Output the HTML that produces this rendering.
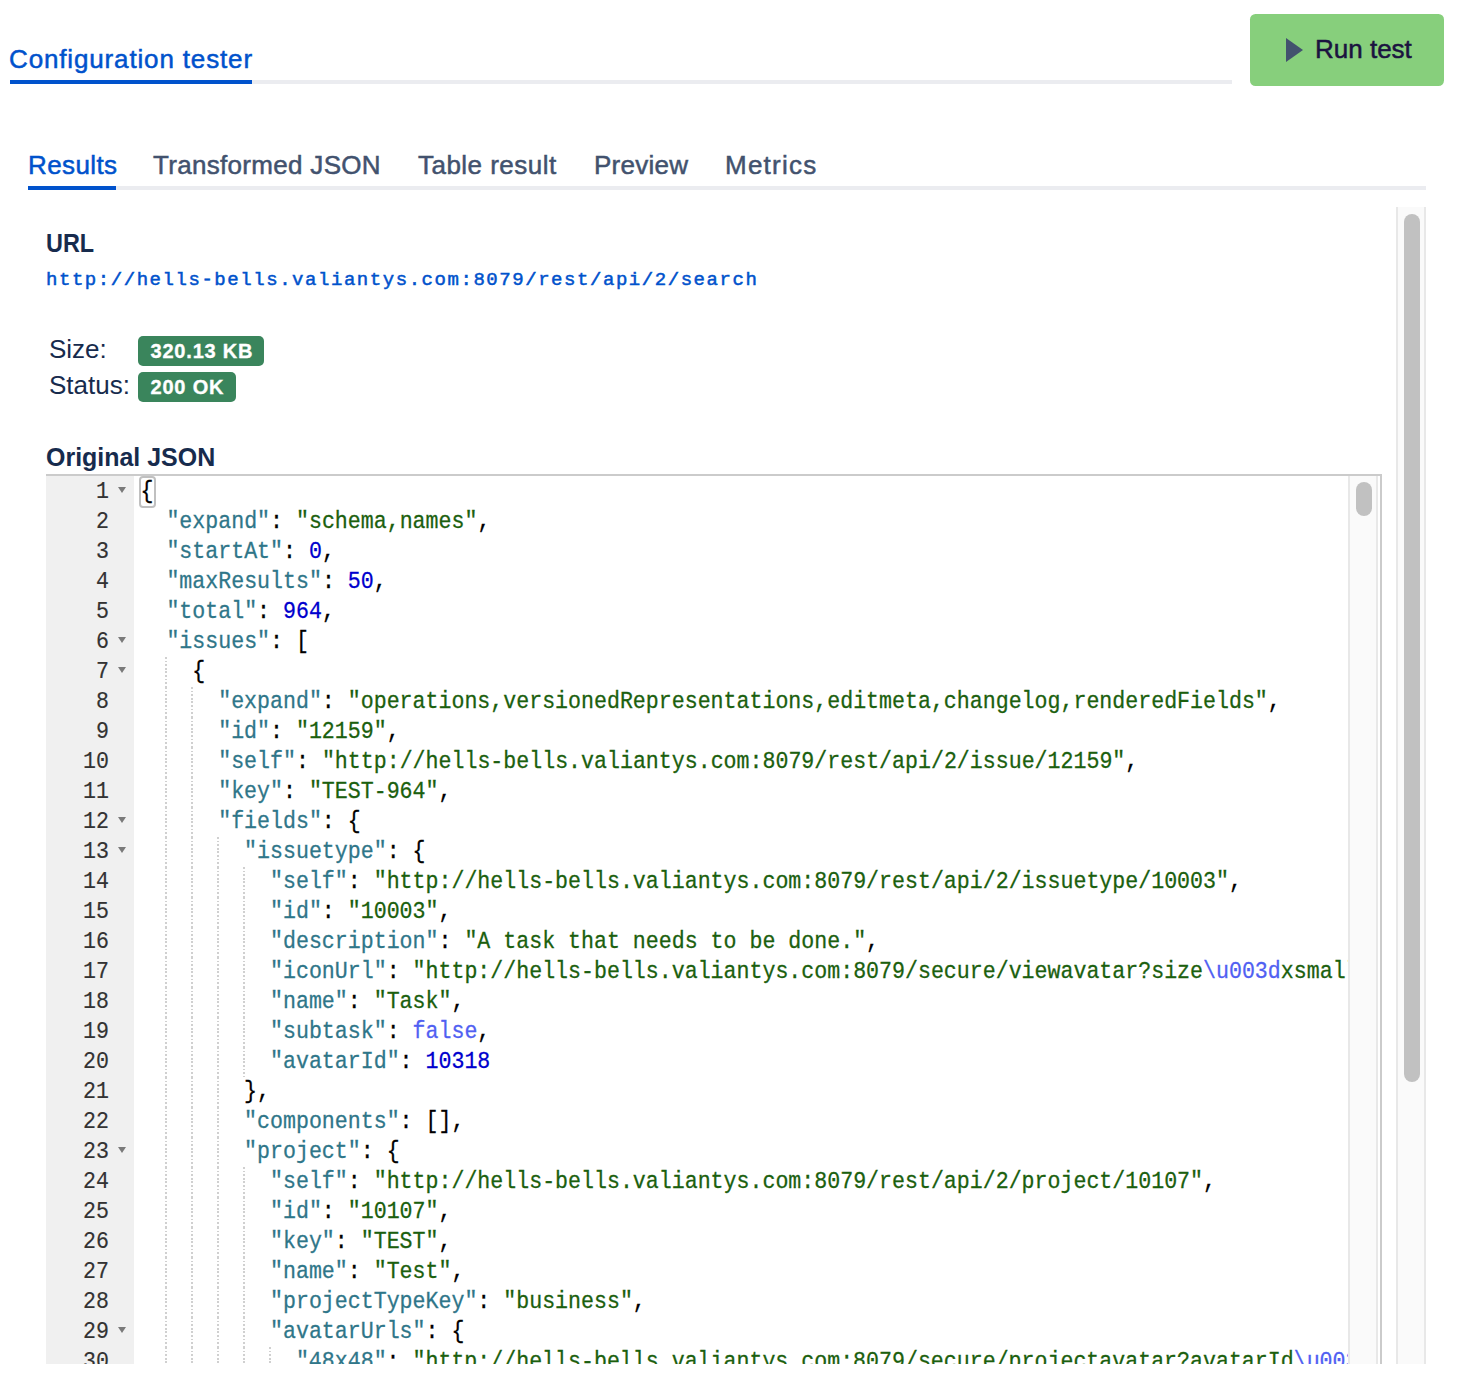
<!DOCTYPE html>
<html><head><meta charset="utf-8">
<style>
html,body{margin:0;padding:0;background:#fff;width:1458px;height:1394px;overflow:hidden;position:relative;font-family:"Liberation Sans",sans-serif;}
.abs{position:absolute;}
.t{position:absolute;white-space:nowrap;line-height:1;}
#ctitle{left:9px;top:46px;font-size:26px;color:#0052cc;letter-spacing:0.85px;-webkit-text-stroke:0.5px #0052cc;}
#cul{left:10px;top:80px;width:242px;height:4px;background:#0052cc;}
#cgl{left:252px;top:80px;width:980px;height:4px;background:#ebecf0;}
#btn{left:1250px;top:14px;width:194px;height:72px;background:#87cf7c;border-radius:5.5px;}
#tri{left:1286px;top:38px;width:0;height:0;border-top:12.5px solid transparent;border-bottom:12.5px solid transparent;border-left:17px solid #42526e;}
#btxt{left:1315px;top:36px;font-size:26px;color:#1b1340;-webkit-text-stroke:0.5px #1b1340;}
.tab{position:absolute;top:152px;-webkit-text-stroke:0.5px currentColor;font-size:26px;color:#42526e;white-space:nowrap;line-height:1;}
#tline{left:28px;top:186px;width:1398px;height:4px;background:#ebecf0;}
#tul{left:28px;top:186px;width:88px;height:4px;background:#0052cc;}
.h{position:absolute;font-weight:bold;font-size:26px;color:#172b4d;white-space:nowrap;line-height:1;}
#url{left:46px;top:271px;font-family:"Liberation Mono",monospace;font-size:19px;letter-spacing:1.55px;color:#0052cc;-webkit-text-stroke:0.5px #0052cc;}
.lbl{position:absolute;font-size:26px;color:#172b4d;white-space:nowrap;line-height:1;}
.badge{position:absolute;background:#3a855c;border-radius:5px;color:#fff;font-weight:bold;font-size:20px;line-height:30px;padding-left:12.5px;letter-spacing:0.8px;-webkit-text-stroke:0.35px #fff;box-sizing:border-box;height:30px;white-space:nowrap;}
#editor{left:46px;top:474px;width:1336px;height:890px;box-sizing:border-box;border-top:2px solid #cbcbcb;border-right:2px solid #cbcbcb;overflow:hidden;background:#fff;}
#gutter{position:absolute;left:0;top:0;width:88px;height:100%;background:#f0f0f0;}
.gl{position:absolute;right:25px;height:30px;line-height:30px;padding-top:1px;font-family:"Liberation Mono",monospace;font-size:21.6px;color:#333;-webkit-text-stroke:0.15px #333;transform:scaleY(1.1);transform-origin:0 21.8px;}
.fw{position:absolute;left:72px;width:0;height:0;border-left:4.5px solid transparent;border-right:4.5px solid transparent;border-top:6px solid #7a7a7a;}
#code{position:absolute;left:94.5px;top:1px;width:1207.5px;height:100%;overflow:hidden;}
.cl{position:absolute;height:30px;line-height:30px;white-space:pre;font-family:"Liberation Mono",monospace;font-size:21.6px;color:#000;-webkit-text-stroke:0.25px currentColor;transform:scaleY(1.1);transform-origin:0 20.8px;}
.v{color:#2f7689}.s{color:#1b600e}.n{color:#0000cd}.l{color:#5060f2}
.ig{position:absolute;width:2px;height:30px;margin-left:-1px;background:repeating-linear-gradient(to bottom,#d0d0d0 0,#d0d0d0 1.8px,transparent 1.8px,transparent 3.6px);}
#brk{position:absolute;left:92.5px;top:0;width:17.3px;height:31.5px;box-sizing:border-box;border:2px solid #c0c0c0;border-radius:4px;}
#isb{position:absolute;left:1302px;top:0;width:30px;height:100%;background:#fafafa;border-left:2px solid #e8e8e8;border-right:2px solid #e8e8e8;box-sizing:border-box;}
#ithumb{position:absolute;left:1310px;top:6px;width:16px;height:34px;background:#c1c1c1;border-radius:8px;}
#osb{left:1396px;top:207px;width:30px;height:1157px;background:#fafafa;border-left:2px solid #e8e8e8;border-right:2px solid #e8e8e8;box-sizing:border-box;}
#othumb{left:1404px;top:214px;width:16px;height:868px;background:#c1c1c1;border-radius:8px;}
</style></head><body>
<div class="t" id="ctitle">Configuration tester</div>
<div class="abs" id="cgl"></div>
<div class="abs" id="cul"></div>
<div class="abs" id="btn"></div>
<div class="abs" id="tri"></div>
<div class="t" id="btxt">Run test</div>

<div class="abs" id="tline"></div>
<div class="abs" id="tul"></div>
<div class="tab" style="left:28px;color:#0052cc;letter-spacing:0.4px">Results</div>
<div class="tab" style="left:153px;letter-spacing:0.31px">Transformed JSON</div>
<div class="tab" style="left:418px;letter-spacing:0.47px">Table result</div>
<div class="tab" style="left:594px;letter-spacing:0.27px">Preview</div>
<div class="tab" style="left:725px;letter-spacing:1.25px">Metrics</div>

<div class="h" style="left:46px;top:230px;transform:scaleX(0.9);transform-origin:0 0">URL</div>
<div class="t" id="url">http://hells-bells.valiantys.com:8079/rest/api/2/search</div>
<div class="lbl" style="left:49px;top:336px">Size:</div>
<div class="lbl" style="left:49px;top:372px">Status:</div>
<div class="badge" style="left:138px;top:336px;width:126px">320.13 KB</div>
<div class="badge" style="left:138px;top:372px;width:98px">200 OK</div>
<div class="h" style="left:46px;top:444px;transform:scaleX(0.96);transform-origin:0 0">Original JSON</div>

<div class="abs" id="editor">
  <div id="gutter">
<div class="gl" style="top:0px">1</div>
<div class="fw" style="top:11px"></div>
<div class="gl" style="top:30px">2</div>
<div class="gl" style="top:60px">3</div>
<div class="gl" style="top:90px">4</div>
<div class="gl" style="top:120px">5</div>
<div class="gl" style="top:150px">6</div>
<div class="fw" style="top:161px"></div>
<div class="gl" style="top:180px">7</div>
<div class="fw" style="top:191px"></div>
<div class="gl" style="top:210px">8</div>
<div class="gl" style="top:240px">9</div>
<div class="gl" style="top:270px">10</div>
<div class="gl" style="top:300px">11</div>
<div class="gl" style="top:330px">12</div>
<div class="fw" style="top:341px"></div>
<div class="gl" style="top:360px">13</div>
<div class="fw" style="top:371px"></div>
<div class="gl" style="top:390px">14</div>
<div class="gl" style="top:420px">15</div>
<div class="gl" style="top:450px">16</div>
<div class="gl" style="top:480px">17</div>
<div class="gl" style="top:510px">18</div>
<div class="gl" style="top:540px">19</div>
<div class="gl" style="top:570px">20</div>
<div class="gl" style="top:600px">21</div>
<div class="gl" style="top:630px">22</div>
<div class="gl" style="top:660px">23</div>
<div class="fw" style="top:671px"></div>
<div class="gl" style="top:690px">24</div>
<div class="gl" style="top:720px">25</div>
<div class="gl" style="top:750px">26</div>
<div class="gl" style="top:780px">27</div>
<div class="gl" style="top:810px">28</div>
<div class="gl" style="top:840px">29</div>
<div class="fw" style="top:851px"></div>
<div class="gl" style="top:870px">30</div>
  </div>
  <div id="code">
<div class="ig" style="top:180px;left:25.90px"></div>
<div class="ig" style="top:210px;left:25.90px"></div>
<div class="ig" style="top:210px;left:51.80px"></div>
<div class="ig" style="top:240px;left:25.90px"></div>
<div class="ig" style="top:240px;left:51.80px"></div>
<div class="ig" style="top:270px;left:25.90px"></div>
<div class="ig" style="top:270px;left:51.80px"></div>
<div class="ig" style="top:300px;left:25.90px"></div>
<div class="ig" style="top:300px;left:51.80px"></div>
<div class="ig" style="top:330px;left:25.90px"></div>
<div class="ig" style="top:330px;left:51.80px"></div>
<div class="ig" style="top:360px;left:25.90px"></div>
<div class="ig" style="top:360px;left:51.80px"></div>
<div class="ig" style="top:360px;left:77.70px"></div>
<div class="ig" style="top:390px;left:25.90px"></div>
<div class="ig" style="top:390px;left:51.80px"></div>
<div class="ig" style="top:390px;left:77.70px"></div>
<div class="ig" style="top:390px;left:103.60px"></div>
<div class="ig" style="top:420px;left:25.90px"></div>
<div class="ig" style="top:420px;left:51.80px"></div>
<div class="ig" style="top:420px;left:77.70px"></div>
<div class="ig" style="top:420px;left:103.60px"></div>
<div class="ig" style="top:450px;left:25.90px"></div>
<div class="ig" style="top:450px;left:51.80px"></div>
<div class="ig" style="top:450px;left:77.70px"></div>
<div class="ig" style="top:450px;left:103.60px"></div>
<div class="ig" style="top:480px;left:25.90px"></div>
<div class="ig" style="top:480px;left:51.80px"></div>
<div class="ig" style="top:480px;left:77.70px"></div>
<div class="ig" style="top:480px;left:103.60px"></div>
<div class="ig" style="top:510px;left:25.90px"></div>
<div class="ig" style="top:510px;left:51.80px"></div>
<div class="ig" style="top:510px;left:77.70px"></div>
<div class="ig" style="top:510px;left:103.60px"></div>
<div class="ig" style="top:540px;left:25.90px"></div>
<div class="ig" style="top:540px;left:51.80px"></div>
<div class="ig" style="top:540px;left:77.70px"></div>
<div class="ig" style="top:540px;left:103.60px"></div>
<div class="ig" style="top:570px;left:25.90px"></div>
<div class="ig" style="top:570px;left:51.80px"></div>
<div class="ig" style="top:570px;left:77.70px"></div>
<div class="ig" style="top:570px;left:103.60px"></div>
<div class="ig" style="top:600px;left:25.90px"></div>
<div class="ig" style="top:600px;left:51.80px"></div>
<div class="ig" style="top:600px;left:77.70px"></div>
<div class="ig" style="top:630px;left:25.90px"></div>
<div class="ig" style="top:630px;left:51.80px"></div>
<div class="ig" style="top:630px;left:77.70px"></div>
<div class="ig" style="top:660px;left:25.90px"></div>
<div class="ig" style="top:660px;left:51.80px"></div>
<div class="ig" style="top:660px;left:77.70px"></div>
<div class="ig" style="top:690px;left:25.90px"></div>
<div class="ig" style="top:690px;left:51.80px"></div>
<div class="ig" style="top:690px;left:77.70px"></div>
<div class="ig" style="top:690px;left:103.60px"></div>
<div class="ig" style="top:720px;left:25.90px"></div>
<div class="ig" style="top:720px;left:51.80px"></div>
<div class="ig" style="top:720px;left:77.70px"></div>
<div class="ig" style="top:720px;left:103.60px"></div>
<div class="ig" style="top:750px;left:25.90px"></div>
<div class="ig" style="top:750px;left:51.80px"></div>
<div class="ig" style="top:750px;left:77.70px"></div>
<div class="ig" style="top:750px;left:103.60px"></div>
<div class="ig" style="top:780px;left:25.90px"></div>
<div class="ig" style="top:780px;left:51.80px"></div>
<div class="ig" style="top:780px;left:77.70px"></div>
<div class="ig" style="top:780px;left:103.60px"></div>
<div class="ig" style="top:810px;left:25.90px"></div>
<div class="ig" style="top:810px;left:51.80px"></div>
<div class="ig" style="top:810px;left:77.70px"></div>
<div class="ig" style="top:810px;left:103.60px"></div>
<div class="ig" style="top:840px;left:25.90px"></div>
<div class="ig" style="top:840px;left:51.80px"></div>
<div class="ig" style="top:840px;left:77.70px"></div>
<div class="ig" style="top:840px;left:103.60px"></div>
<div class="ig" style="top:870px;left:25.90px"></div>
<div class="ig" style="top:870px;left:51.80px"></div>
<div class="ig" style="top:870px;left:77.70px"></div>
<div class="ig" style="top:870px;left:103.60px"></div>
<div class="ig" style="top:870px;left:129.50px"></div>
<div class="cl" style="top:0px;left:0.00px">{</div>
<div class="cl" style="top:30px;left:25.90px"><span class="v">&quot;expand&quot;</span>: <span class="s">&quot;schema,names&quot;</span>,</div>
<div class="cl" style="top:60px;left:25.90px"><span class="v">&quot;startAt&quot;</span>: <span class="n">0</span>,</div>
<div class="cl" style="top:90px;left:25.90px"><span class="v">&quot;maxResults&quot;</span>: <span class="n">50</span>,</div>
<div class="cl" style="top:120px;left:25.90px"><span class="v">&quot;total&quot;</span>: <span class="n">964</span>,</div>
<div class="cl" style="top:150px;left:25.90px"><span class="v">&quot;issues&quot;</span>: [</div>
<div class="cl" style="top:180px;left:51.80px">{</div>
<div class="cl" style="top:210px;left:77.70px"><span class="v">&quot;expand&quot;</span>: <span class="s">&quot;operations,versionedRepresentations,editmeta,changelog,renderedFields&quot;</span>,</div>
<div class="cl" style="top:240px;left:77.70px"><span class="v">&quot;id&quot;</span>: <span class="s">&quot;12159&quot;</span>,</div>
<div class="cl" style="top:270px;left:77.70px"><span class="v">&quot;self&quot;</span>: <span class="s">&quot;http://hells-bells.valiantys.com:8079/rest/api/2/issue/12159&quot;</span>,</div>
<div class="cl" style="top:300px;left:77.70px"><span class="v">&quot;key&quot;</span>: <span class="s">&quot;TEST-964&quot;</span>,</div>
<div class="cl" style="top:330px;left:77.70px"><span class="v">&quot;fields&quot;</span>: {</div>
<div class="cl" style="top:360px;left:103.60px"><span class="v">&quot;issuetype&quot;</span>: {</div>
<div class="cl" style="top:390px;left:129.50px"><span class="v">&quot;self&quot;</span>: <span class="s">&quot;http://hells-bells.valiantys.com:8079/rest/api/2/issuetype/10003&quot;</span>,</div>
<div class="cl" style="top:420px;left:129.50px"><span class="v">&quot;id&quot;</span>: <span class="s">&quot;10003&quot;</span>,</div>
<div class="cl" style="top:450px;left:129.50px"><span class="v">&quot;description&quot;</span>: <span class="s">&quot;A task that needs to be done.&quot;</span>,</div>
<div class="cl" style="top:480px;left:129.50px"><span class="v">&quot;iconUrl&quot;</span>: <span class="s">&quot;http://hells-bells.valiantys.com:8079/secure/viewavatar?size</span><span class="l">\u003d</span><span class="s">xsmall\u0026avatarId\u003d10318&quot;</span>,</div>
<div class="cl" style="top:510px;left:129.50px"><span class="v">&quot;name&quot;</span>: <span class="s">&quot;Task&quot;</span>,</div>
<div class="cl" style="top:540px;left:129.50px"><span class="v">&quot;subtask&quot;</span>: <span class="l">false</span>,</div>
<div class="cl" style="top:570px;left:129.50px"><span class="v">&quot;avatarId&quot;</span>: <span class="n">10318</span></div>
<div class="cl" style="top:600px;left:103.60px">},</div>
<div class="cl" style="top:630px;left:103.60px"><span class="v">&quot;components&quot;</span>: [],</div>
<div class="cl" style="top:660px;left:103.60px"><span class="v">&quot;project&quot;</span>: {</div>
<div class="cl" style="top:690px;left:129.50px"><span class="v">&quot;self&quot;</span>: <span class="s">&quot;http://hells-bells.valiantys.com:8079/rest/api/2/project/10107&quot;</span>,</div>
<div class="cl" style="top:720px;left:129.50px"><span class="v">&quot;id&quot;</span>: <span class="s">&quot;10107&quot;</span>,</div>
<div class="cl" style="top:750px;left:129.50px"><span class="v">&quot;key&quot;</span>: <span class="s">&quot;TEST&quot;</span>,</div>
<div class="cl" style="top:780px;left:129.50px"><span class="v">&quot;name&quot;</span>: <span class="s">&quot;Test&quot;</span>,</div>
<div class="cl" style="top:810px;left:129.50px"><span class="v">&quot;projectTypeKey&quot;</span>: <span class="s">&quot;business&quot;</span>,</div>
<div class="cl" style="top:840px;left:129.50px"><span class="v">&quot;avatarUrls&quot;</span>: {</div>
<div class="cl" style="top:870px;left:155.40px"><span class="v">&quot;48x48&quot;</span>: <span class="s">&quot;http://hells-bells.valiantys.com:8079/secure/projectavatar?avatarId</span><span class="l">\u003d</span><span class="s">10107&quot;</span></div>
  </div>
  <div id="brk"></div>
  <div id="isb"></div>
  <div id="ithumb"></div>
</div>
<div class="abs" id="osb"></div>
<div class="abs" id="othumb"></div>
</body></html>
